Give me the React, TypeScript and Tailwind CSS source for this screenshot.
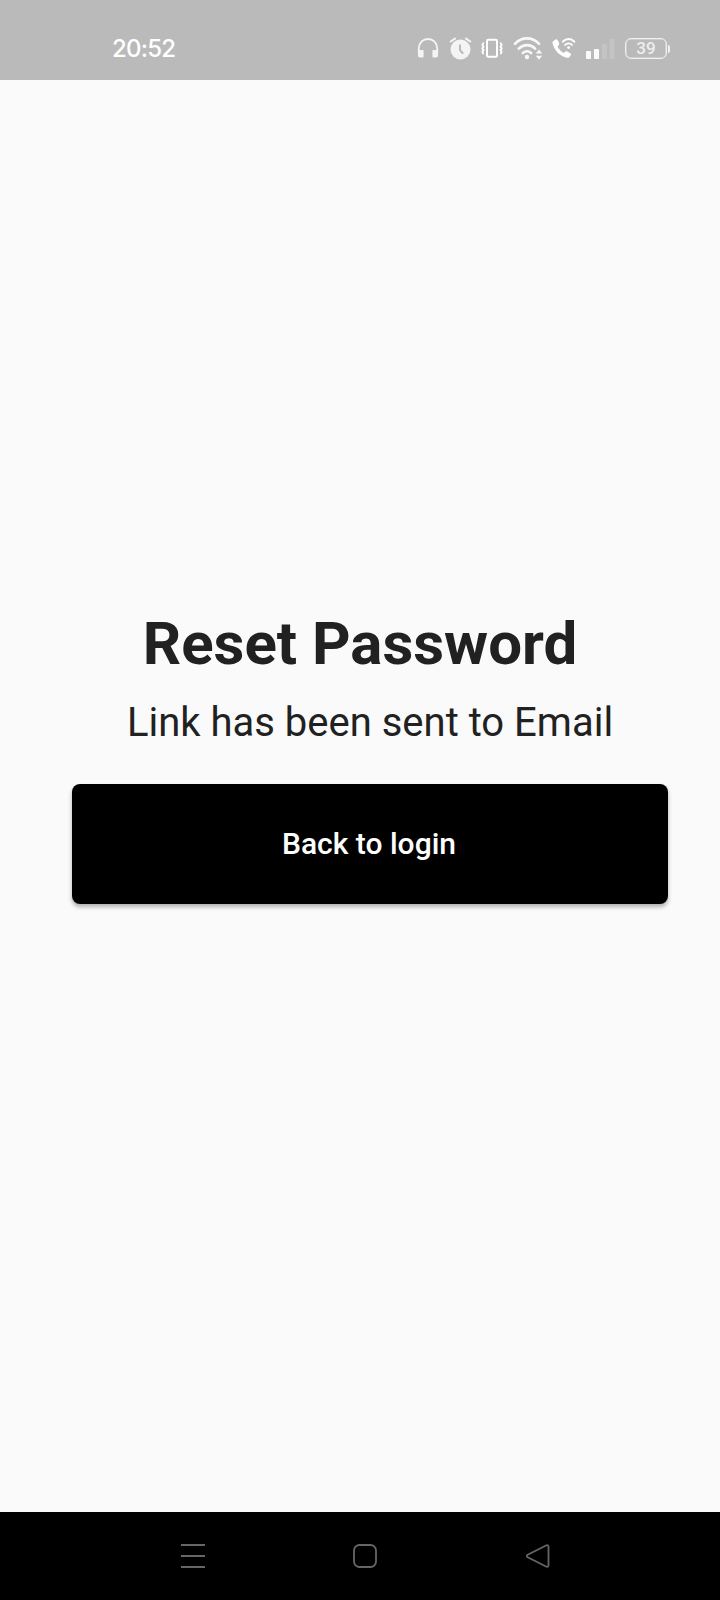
function Headphones() {
  return (
    <svg className="h-6 w-[22px]" viewBox="0 0 22 24" fill="none">
      <path d="M1.8 16V11.200a9.200 9.200 0 0 1 18.400 0V16" stroke="#f4f4f4" strokeWidth="1.900" />
      <path d="M1 13h4.600a1 1 0 0 1 1 1v5.400a1 1 0 0 1-1 1H2.600A1.600 1.600 0 0 1 1 18.800zM21 13h-4.600a1 1 0 0 0-1 1v5.400a1 1 0 0 0 1 1h3a1.600 1.600 0 0 0 1.600-1.600z" fill="#f4f4f4" />
    </svg>
  );
}

function Alarm() {
  return (
    <svg className="ml-[9.500px] h-6 w-[23px]" viewBox="0 0 23 24" fill="none" strokeLinecap="round">
      <circle cx="11.500" cy="12.500" r="10" fill="#f4f4f4" />
      <path d="M1.700 4.500 6 1.600M21.300 4.500 17 1.600" stroke="#f4f4f4" strokeWidth="2.100" />
      <path d="M11 8.300v4.800l2.600 2.900" stroke="#bababa" strokeWidth="2" strokeLinejoin="round" />
    </svg>
  );
}

function Vibrate() {
  return (
    <svg className="ml-2 h-6 w-6" viewBox="0 0 24 24" fill="none" stroke="#fff" strokeLinejoin="round" strokeLinecap="round">
      <rect x="7" y="2.800" width="10" height="17" rx="1.300" strokeWidth="2" />
      <path d="M3.200 6.300 2.300 8l1.300 1.700-1.400 1.700 1.400 1.700-1.300 1.700.9 1.700M20.800 6.300l.9 1.700-1.300 1.700 1.400 1.700-1.400 1.700 1.300 1.700-.9 1.700" strokeWidth="1.800" />
    </svg>
  );
}

function Wifi() {
  return (
    <svg className="ml-[9.500px] h-6 w-8" viewBox="0 0 32 24" fill="none" stroke="#f8f8f8" strokeLinecap="round">
      <path d="M1.900 6.800C9-.4 19 -.4 26.100 6.800" strokeWidth="2.600" />
      <path d="M5.800 11.700c4.700-4.800 11.700-4.800 16.400 0" strokeWidth="2.600" />
      <path d="M9.800 16c2.500-2.100 5.900-2.100 8.400 0" strokeWidth="2.600" />
      <circle cx="14" cy="20" r="2.200" fill="#f8f8f8" stroke="none" />
      <path d="M22.800 16.600h6.400l-3.200-4zM22.800 18.800h6.400l-3.200 4z" fill="#f8f8f8" stroke="none" />
    </svg>
  );
}

function WifiCall() {
  return (
    <svg className="ml-[7px] h-6 w-6" viewBox="0 0 24 24" fill="none" strokeLinecap="round">
      <path d="M1.400 4 3.600 2.400c.8-.5 1.600-.2 2 .5L7.100 6c.3.700.2 1.300-.3 1.900L5.500 9.400c1.400 3 3.400 5.100 6.200 6.500l1.700-1.300c.6-.4 1.200-.4 1.900 0l3 1.700c.8.500.9 1.200.5 1.900l-1.400 1.800c-.7.800-1.500 1-2.500.8C8.300 19.200 2.600 13.900.6 6.700.3 5.500.6 4.600 1.400 4Z" fill="#fff" />
      <path d="M10.900 4.700c3.200-3.600 8.300-3.600 11.400 0M13.200 7.900c2-1.900 4.900-1.900 6.800 0" stroke="#fff" strokeWidth="1.900" />
      <circle cx="16.600" cy="10.600" r="1.400" fill="#fff" />
    </svg>
  );
}

function Signal() {
  return (
    <svg className="ml-[9px] h-6 w-[30px]" viewBox="0 0 30 24">
      <rect x="1" y="14" width="5" height="8" rx="0.800" fill="#fafafa" />
      <rect x="9" y="12" width="5" height="10" rx="0.800" fill="#fafafa" />
      <rect x="17" y="7" width="5" height="15" rx="0.800" fill="#c4c4c4" />
      <rect x="24.500" y="2" width="5" height="20" rx="0.800" fill="#c4c4c4" />
    </svg>
  );
}

function Battery() {
  return (
    <div className="ml-2.5 flex items-center gap-px">
      <div className="flex h-[21px] w-[42px] items-center justify-center rounded-md border-[1.5px] border-[#f0f0f0] text-[17px] leading-none font-medium text-[#eeeeee] ring-[0.5px] ring-[#f0f0f0]/70 ring-inset">
        39
      </div>
      <div className="h-2 w-[2px] rounded-r-sm bg-[#f0f0f0]" />
    </div>
  );
}

export default function App() {
  return (
    <div className="flex h-[1600px] w-[720px] flex-col overflow-hidden bg-[#fafafa] font-[Roboto,sans-serif]">
      <header className="flex h-20 shrink-0 items-center justify-between bg-[#bababa] pt-[17px] pr-[50px] pl-28">
        <span className="font-[Inter,sans-serif] text-2xl leading-none font-medium tracking-[-0.8px] text-white">20:52</span>
        <div className="flex items-center">
          <Headphones />
          <Alarm />
          <Vibrate />
          <Wifi />
          <WifiCall />
          <Signal />
          <Battery />
        </div>
      </header>

      <main className="flex flex-1 flex-col pt-[528px]">
        <h1 className="text-center text-[60px] leading-[71px] font-bold text-[#212121]">Reset Password</h1>
        <p className="mt-5 pl-5 text-center text-[40px] leading-[47px] text-[#212121]">
          Link has been sent to Email
        </p>
        <button className="mt-[38px] mr-[52px] ml-[72px] h-[120px] rounded-lg bg-black pr-[2px] pb-[2px] text-[30px] font-medium text-white shadow-[0_3px_4px_rgba(0,0,0,0.3)]">
          Back to login
        </button>
      </main>

      <nav className="flex h-[88px] shrink-0 items-center bg-black pl-[181px]">
        <svg className="h-6 w-6" viewBox="0 0 24 24" stroke="#666" strokeWidth="2">
          <path d="M0 1h24M0 12h24M0 23h24" />
        </svg>
        <svg className="ml-[148px] h-6 w-6" viewBox="0 0 24 24" fill="none" stroke="#666" strokeWidth="1.800">
          <rect x="1" y="1" width="22" height="22" rx="5.500" />
        </svg>
        <svg className="ml-[148.500px] h-6 w-6" viewBox="0 0 24 24" fill="none" stroke="#666" strokeWidth="1.800" strokeLinejoin="round">
          <path d="M20.500 1.300 1.700 10.800q-1.700 1.200 0 2.400l18.800 9.500q2 .5 2-1.500V2.800q0-2-2-1.500Z" />
        </svg>
      </nav>
    </div>
  );
}
